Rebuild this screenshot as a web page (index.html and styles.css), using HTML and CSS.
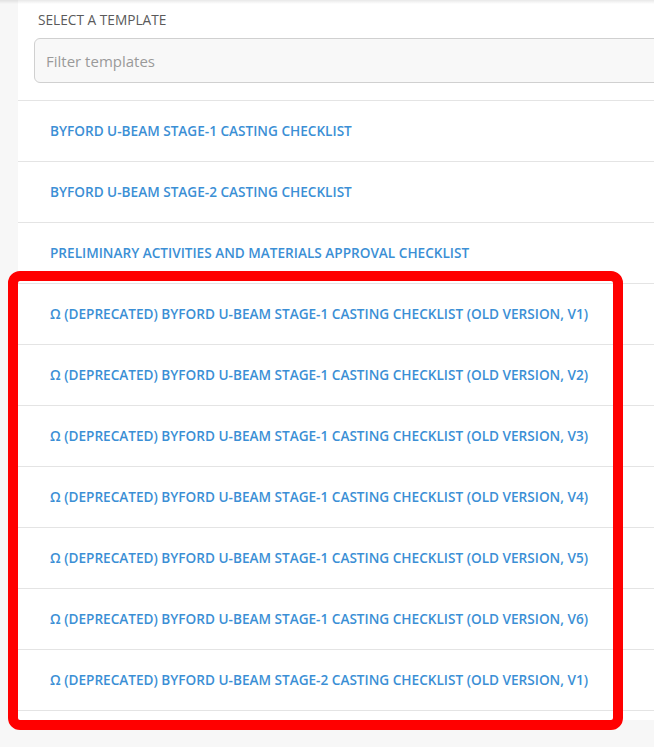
FILE: index.html
```html
<!DOCTYPE html>
<html>
<head>
<meta charset="utf-8">
<link rel="stylesheet" href="styles.css">
</head>
<body>
<div class="page">
  <div class="strip"></div>
  <div class="panel">
    <div class="picker">
      <div class="label">SELECT A TEMPLATE</div>
      <div class="filter">Filter templates</div>
    </div>
    <ul class="list">
      <li class="row">BYFORD U-BEAM STAGE-1 CASTING CHECKLIST</li>
      <li class="row">BYFORD U-BEAM STAGE-2 CASTING CHECKLIST</li>
      <li class="row">PRELIMINARY ACTIVITIES AND MATERIALS APPROVAL CHECKLIST</li>
      <li class="row">Ω (DEPRECATED) BYFORD U-BEAM STAGE-1 CASTING CHECKLIST (OLD VERSION, V1)</li>
      <li class="row">Ω (DEPRECATED) BYFORD U-BEAM STAGE-1 CASTING CHECKLIST (OLD VERSION, V2)</li>
      <li class="row">Ω (DEPRECATED) BYFORD U-BEAM STAGE-1 CASTING CHECKLIST (OLD VERSION, V3)</li>
      <li class="row">Ω (DEPRECATED) BYFORD U-BEAM STAGE-1 CASTING CHECKLIST (OLD VERSION, V4)</li>
      <li class="row">Ω (DEPRECATED) BYFORD U-BEAM STAGE-1 CASTING CHECKLIST (OLD VERSION, V5)</li>
      <li class="row">Ω (DEPRECATED) BYFORD U-BEAM STAGE-1 CASTING CHECKLIST (OLD VERSION, V6)</li>
      <li class="row">Ω (DEPRECATED) BYFORD U-BEAM STAGE-2 CASTING CHECKLIST (OLD VERSION, V1)</li>
    </ul>
  </div>
</div>
<div class="highlight"></div>
</body>
</html>
```

FILE: styles.css
```css
html, body {
  margin: 0;
  padding: 0;
  background: #f7f7f7;
  overflow: hidden;
  height: 747px;
}
body {
  position: relative;
  font-family: "Open Sans", "Noto Sans", sans-serif;
}
.page {
  display: flex;
  width: 654px;
  overflow: hidden;
  position: relative;
}
.page::before {
  content: "";
  position: absolute;
  left: 0;
  right: 0;
  top: 0;
  height: 4px;
  background: linear-gradient(rgba(0,0,0,0.09), rgba(0,0,0,0));
}
.strip {
  width: 18px;
  flex: none;
}
.panel {
  flex: 1;
  min-width: 0;
  background: #fff;
  padding-bottom: 9px;
}
.picker {
  padding: 11px 0 17px 16px;
  border-bottom: 1px solid #e4e4e4;
  margin-right: -20px;
}
.label {
  padding-left: 4px;
  font-size: 13.7px;
  line-height: 17px;
  color: #5a5a5a;
  font-weight: 500;
  margin-bottom: 10px;
}
.filter {
  height: 43px;
  border: 1px solid #d0d0d0;
  border-radius: 6px;
  background: #f8f8f8;
  padding-left: 11px;
  display: flex;
  align-items: center;
  font-size: 15px;
  color: #9a9a9a;
}
.list {
  list-style: none;
  margin: 0;
  padding: 0;
}
.row {
  height: 60px;
  box-sizing: border-box;
  height: 61px;
  padding-bottom: 2px;
  border-bottom: 1px solid #e4e4e4;
  display: flex;
  align-items: center;
  padding-left: 32px;
  font-size: 13.6px;
  font-weight: 600;
  color: #3b8fd5;
  white-space: nowrap;
}
.highlight {
  position: absolute;
  left: 8px;
  top: 271px;
  width: 615px;
  height: 459px;
  box-sizing: border-box;
  border: 10px solid #ff0000;
  border-radius: 12px;
}
```
